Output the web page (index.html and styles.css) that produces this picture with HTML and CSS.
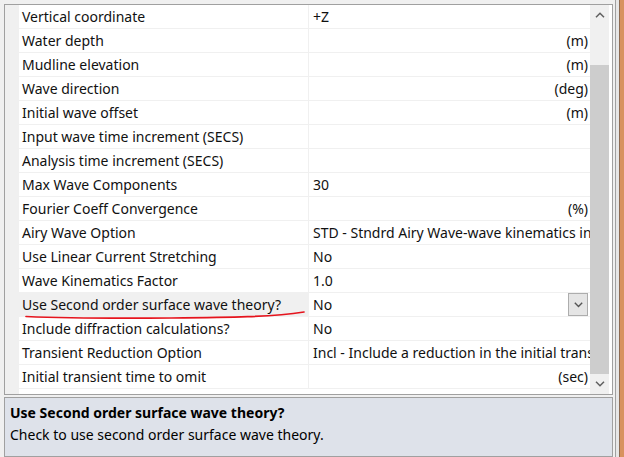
FILE: index.html
```html
<!DOCTYPE html>
<html>
<head>
<meta charset="utf-8">
<link rel="stylesheet" href="styles.css">
</head>
<body>
<div class="app">
  <div class="main">
    <div class="panes">
      <div class="grid-frame">
        <div class="gutter"></div>
        <div class="rows">
          <div class="row"><div class="label">Vertical coordinate</div><div class="value">+Z</div></div>
          <div class="row"><div class="label">Water depth</div><div class="value unit">(m)</div></div>
          <div class="row"><div class="label">Mudline elevation</div><div class="value unit">(m)</div></div>
          <div class="row"><div class="label">Wave direction</div><div class="value unit">(deg)</div></div>
          <div class="row"><div class="label">Initial wave offset</div><div class="value unit">(m)</div></div>
          <div class="row"><div class="label">Input wave time increment (SECS)</div><div class="value"></div></div>
          <div class="row"><div class="label">Analysis time increment (SECS)</div><div class="value"></div></div>
          <div class="row"><div class="label">Max Wave Components</div><div class="value">30</div></div>
          <div class="row"><div class="label">Fourier Coeff Convergence</div><div class="value unit">(%)</div></div>
          <div class="row"><div class="label">Airy Wave Option</div><div class="value">STD - Stndrd Airy Wave-wave kinematics in the splash zone</div></div>
          <div class="row"><div class="label">Use Linear Current Stretching</div><div class="value">No</div></div>
          <div class="row"><div class="label">Wave Kinematics Factor</div><div class="value">1.0</div></div>
          <div class="row selected"><div class="label">Use Second order surface wave theory?</div><div class="value edit"><span class="edit-text">No</span><span class="drop"><svg width="9" height="6" viewBox="0 0 9 6"><polyline points="0.8,0.8 4.5,4.5 8.2,0.8" fill="none" stroke="#555" stroke-width="1.4"/></svg></span></div></div>
          <div class="row"><div class="label">Include diffraction calculations?</div><div class="value">No</div></div>
          <div class="row"><div class="label">Transient Reduction Option</div><div class="value">Incl - Include a reduction in the initial transient</div></div>
          <div class="row"><div class="label">Initial transient time to omit</div><div class="value unit">(sec)</div></div>
        </div>
        <div class="scrollbar">
          <div class="arrow"><svg width="10" height="6" viewBox="0 0 10 6"><polyline points="1,5.2 5,1.2 9,5.2" fill="none" stroke="#606060" stroke-width="1.5"/></svg></div>
          <div class="track"><div class="thumb"></div></div>
          <div class="arrow"><svg width="10" height="6" viewBox="0 0 10 6"><polyline points="1,0.8 5,4.8 9,0.8" fill="none" stroke="#606060" stroke-width="1.5"/></svg></div>
        </div>
        <svg class="scribble" width="290" height="14" viewBox="0 0 290 14"><path d="M5 8.5 C 40 10, 90 10.5, 150 10 S 250 9, 283 4" fill="none" stroke="#e5141d" stroke-width="1.7" stroke-linecap="round"/></svg>
      </div>
      <div class="desc">
        <div class="desc-title">Use Second order surface wave theory?</div>
        <div class="desc-text">Check to use second order surface wave theory.</div>
      </div>
    </div>
    <div class="edge"></div>
  </div>
</div>
</body>
</html>
```

FILE: styles.css
```css
html, body {
  margin: 0;
  padding: 0;
}
body {
  width: 624px;
  height: 457px;
  overflow: hidden;
  background: #f0f0f0;
  font-family: "Noto Sans", "Open Sans", sans-serif;
  font-size: 14px;
  color: #111;
}
.app {
  height: 457px;
}
.main {
  display: flex;
  height: 457px;
}
.panes {
  display: flex;
  flex-direction: column;
  gap: 2px;
  padding: 4px 0 0 4px;
  width: 609px;
}
.grid-frame {
  position: relative;
  display: flex;
  height: 389px;
  border: 1px solid #a0a0a0;
  background: #fff;
  padding-right: 2px;
}
.gutter {
  width: 14px;
  background: #f0f0f0;
}
.rows {
  width: 571px;
  display: flex;
  flex-direction: column;
}
.row {
  display: flex;
  height: 23px;
  border-bottom: 1px solid #f0f0f0;
  line-height: 23px;
}
.label {
  width: 286px;
  padding-left: 3px;
  border-right: 1px solid #f0f0f0;
  white-space: nowrap;
  overflow: hidden;
}
.value {
  flex: 1;
  padding: 0 2px 0 4px;
  white-space: nowrap;
  overflow: hidden;
}
.unit {
  text-align: right;
}
.selected .label {
  background: #f0f0f0;
}
.edit {
  display: flex;
  align-items: center;
  justify-content: space-between;
}
.drop {
  width: 18px;
  height: 21px;
  border: 1px solid #adadad;
  background: #e5e5e5;
  display: flex;
  align-items: center;
  justify-content: center;
}
.scrollbar {
  width: 19px;
  display: flex;
  flex-direction: column;
  background: #f0f0f0;
}
.arrow {
  height: 20px;
  display: flex;
  align-items: center;
  justify-content: center;
}
.track {
  flex: 1;
  display: flex;
  flex-direction: column;
  padding: 40px 0 0 0;
}
.thumb {
  flex: 1;
  background: #cdcdcd;
}
.scribble {
  position: absolute;
  left: 16px;
  top: 303px;
}
.desc {
  flex: 1;
  border: 1px solid #a0a0a0;
  background: #dee2ea;
  padding: 4px 5px;
  color: #000;
}
.desc-title {
  font-weight: bold;
  line-height: 22px;
}
.desc-text {
  line-height: 22px;
}
.edge {
  flex: 1;
  display: flex;
  margin-left: 2px;
  border-left: 1px solid #a0a0a0;
  background: linear-gradient(to right, #e6e6e6 0 3px, #8c6a52 3px 4px, #d8925f 4px);
}
```
